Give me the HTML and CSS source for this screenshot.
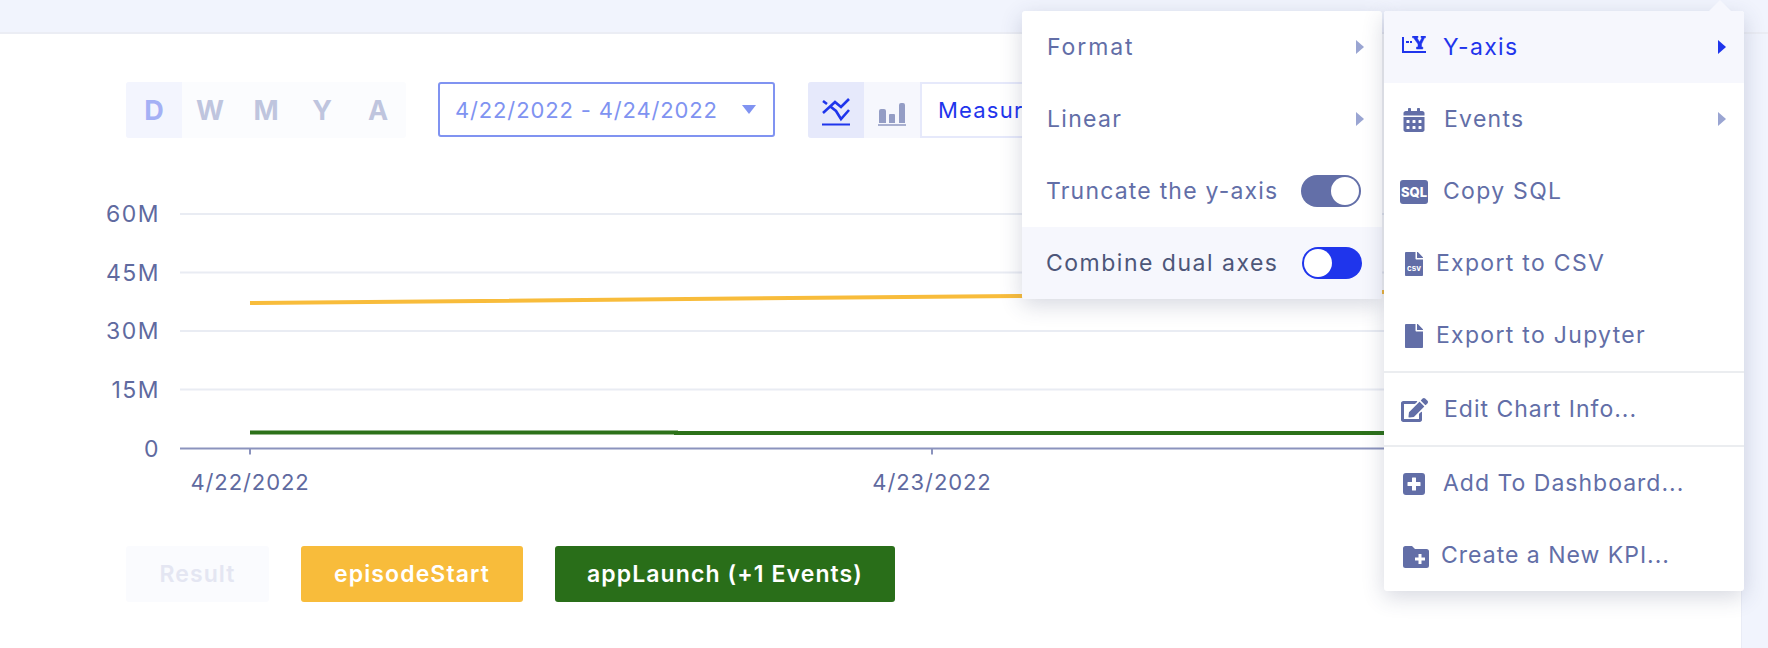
FILE: index.html
```html
<!DOCTYPE html>
<html lang="en">
<head>
<meta charset="utf-8">
<title>Chart</title>
<link rel="stylesheet" href="styles.css">
</head>
<body>
<header class="topbar"></header>
<div class="main">
  <section class="panel">
    <div class="toolbar">
      <div class="granularity">
        <span class="gran on">D</span><span class="gran">W</span><span class="gran">M</span><span class="gran">Y</span><span class="gran">A</span>
      </div>
      <div class="daterange"><span class="daterange-text">4/22/2022 - 4/24/2022</span><i class="caret"></i></div>
      <div class="charttype">
        <span class="ct on">
          <svg class="ct-icon" viewBox="0 0 28 28"><path d="M1 15L13 4l6 5 8-8M1 3l4 3M9 9l5 4 5 8 8-9" fill="none" stroke="#1f35ec" stroke-width="2.600"/><rect y="25.500" width="28" height="2" fill="#1f35ec"/></svg>
        </span>
        <span class="ct">
          <svg class="ct-icon" viewBox="0 0 28 28"><path d="M1 13a2 2 0 0 1 2-2h3a2 2 0 0 1 2 2v12H1zM11 17a1 1 0 0 1 1-1h4a1 1 0 0 1 1 1v8h-6zM21 7a2 2 0 0 1 2-2h2a2 2 0 0 1 2 2v18h-6z" fill="#949dc5"/><rect y="26" width="28" height="2" fill="#a9b0d0"/></svg>
        </span>
      </div>
      <div class="measure">Measure</div>
    </div>
    <svg class="chart" viewBox="0 138 1741 408">
      <g class="grid">
        <path d="M180 214H1710M180 272.500H1710M180 331H1710M180 389.500H1710"/>
      </g>
      <path class="axis" d="M180 448.500H1710M250 448.500v6M932 448.500v6"/>
      <path class="series-y" d="M250 303L1022 296L1384 292L1710 289"/>
      <path class="series-g" d="M250 432.500H676V433H1710"/>
      <g class="ylabels">
        <text x="160" y="222">60M</text>
        <text x="160" y="281">45M</text>
        <text x="160" y="339">30M</text>
        <text x="160" y="398">15M</text>
        <text x="160" y="457">0</text>
      </g>
      <g class="xlabels">
        <text x="250" y="490">4/22/2022</text>
        <text x="932" y="490">4/23/2022</text>
      </g>
    </svg>
    <div class="legend">
      <span class="tag tag-off">Result</span>
      <span class="tag tag-y">episodeStart</span>
      <span class="tag tag-g">appLaunch (+1 Events)</span>
    </div>
  </section>
  <aside class="side"></aside>
</div>

<div class="menu menu-sub">
  <div class="row"><span class="sub-label wide">Format</span><i class="tri"></i></div>
  <div class="row"><span class="sub-label">Linear</span><i class="tri"></i></div>
  <div class="row"><span class="sub-label tight">Truncate the y-axis</span><span class="toggle toggle-right"><b></b></span></div>
  <div class="row hl"><span class="sub-label tight dark">Combine dual axes</span><span class="toggle toggle-left"><b></b></span></div>
</div>

<div class="menu menu-main">
  <i class="notch"></i>
  <div class="row hl active">
    <svg class="ic ic-y" viewBox="0 0 24 18"><path d="M1 1v15h23" fill="none" stroke="#1f35ec" stroke-width="2"/><path d="M4 6h3M8 6h2" stroke="#1f35ec" stroke-width="2"/><path d="M10.500 0h5.500v1.800h-1l2.500 4.200 2.500-4.200h-1V0h4.500v1.800h-1L19.500 8v3h1.300v2h-6.300v-2h1.500V8l-4.500-6.200h-1z" fill="#1f35ec" stroke="#1f35ec" stroke-width=".5"/></svg>
    <span class="label">Y-axis</span><i class="tri"></i>
  </div>
  <div class="row">
    <svg class="ic ic-cal" viewBox="0 0 448 512"><path d="M0 464c0 26.500 21.500 48 48 48h352c26.500 0 48-21.500 48-48V192H0v272zm320-196c0-6.600 5.400-12 12-12h40c6.600 0 12 5.400 12 12v40c0 6.600-5.400 12-12 12h-40c-6.600 0-12-5.400-12-12v-40zm0 128c0-6.600 5.400-12 12-12h40c6.600 0 12 5.400 12 12v40c0 6.600-5.400 12-12 12h-40c-6.600 0-12-5.400-12-12v-40zM192 268c0-6.600 5.400-12 12-12h40c6.600 0 12 5.400 12 12v40c0 6.600-5.400 12-12 12h-40c-6.600 0-12-5.400-12-12v-40zm0 128c0-6.600 5.400-12 12-12h40c6.600 0 12 5.400 12 12v40c0 6.600-5.400 12-12 12h-40c-6.600 0-12-5.400-12-12v-40zM64 268c0-6.600 5.400-12 12-12h40c6.600 0 12 5.400 12 12v40c0 6.600-5.400 12-12 12H76c-6.600 0-12-5.400-12-12v-40zm0 128c0-6.600 5.400-12 12-12h40c6.600 0 12 5.400 12 12v40c0 6.600-5.400 12-12 12H76c-6.600 0-12-5.400-12-12v-40zM400 64h-48V16c0-8.800-7.200-16-16-16h-32c-8.800 0-16 7.200-16 16v48H160V16c0-8.800-7.200-16-16-16h-32c-8.800 0-16 7.200-16 16v48H48C21.500 64 0 85.500 0 112v48h448v-48c0-26.500-21.500-48-48-48z"/></svg>
    <span class="label">Events</span><i class="tri"></i>
  </div>
  <div class="row">
    <svg class="ic ic-sql" viewBox="0 0 28 24"><rect width="28" height="24" rx="3"/><text class="ic-text" x="14" y="17">SQL</text></svg>
    <span class="label">Copy SQL</span>
  </div>
  <div class="row">
    <svg class="ic ic-file" viewBox="0 0 384 512"><path d="M224 136V0H24C10.700 0 0 10.700 0 24v464c0 13.300 10.700 24 24 24h336c13.300 0 24-10.700 24-24V160H248c-13.200 0-24-10.800-24-24zm160-14.100v6.100H256V0h6.100c6.400 0 12.500 2.500 17 7l97.900 98c4.500 4.500 7 10.600 7 16.900z"/><text class="ic-csv" x="192" y="400">csv</text></svg>
    <span class="label">Export to CSV</span>
  </div>
  <div class="row">
    <svg class="ic ic-file" viewBox="0 0 384 512"><path d="M224 136V0H24C10.700 0 0 10.700 0 24v464c0 13.300 10.700 24 24 24h336c13.300 0 24-10.700 24-24V160H248c-13.200 0-24-10.800-24-24zm160-14.100v6.100H256V0h6.100c6.400 0 12.500 2.500 17 7l97.900 98c4.500 4.500 7 10.600 7 16.900z"/></svg>
    <span class="label">Export to Jupyter</span>
  </div>
  <hr class="sep">
  <div class="row">
    <svg class="ic ic-edit" viewBox="0 0 576 512"><path d="M402.600 83.200l90.200 90.200c3.800 3.800 3.800 10 0 13.800L274.400 405.600l-92.800 10.300c-12.400 1.400-22.900-9.100-21.500-21.500l10.300-92.800L388.800 83.200c3.800-3.800 10-3.800 13.800 0zm162-22.900l-48.800-48.800c-15.200-15.200-39.900-15.200-55.200 0l-35.400 35.400c-3.800 3.800-3.800 10 0 13.800l90.200 90.200c3.800 3.800 10 3.800 13.800 0l35.400-35.400c15.200-15.300 15.200-40 0-55.200zM384 346.200V448H64V128h229.800c3.200 0 6.200-1.300 8.500-3.500l40-40c7.600-7.600 2.200-20.500-8.500-20.500H48C21.500 64 0 85.500 0 112v352c0 26.500 21.500 48 48 48h352c26.500 0 48-21.500 48-48V306.200c0-10.700-12.900-16-20.500-8.500l-40 40c-2.200 2.300-3.500 5.300-3.500 8.500z"/></svg>
    <span class="label snug">Edit Chart Info...</span>
  </div>
  <hr class="sep">
  <div class="row">
    <svg class="ic ic-add" viewBox="0 0 22 22"><path fill-rule="evenodd" d="M3 0h16a3 3 0 0 1 3 3v16a3 3 0 0 1-3 3H3a3 3 0 0 1-3-3V3a3 3 0 0 1 3-3zm6 5v4H5a.5.5 0 0 0-.5.5v3a.5.5 0 0 0 .5.5h4v4a.5.5 0 0 0 .5.5h3a.5.5 0 0 0 .5-.5v-4h4a.5.5 0 0 0 .5-.5v-3a.5.5 0 0 0-.5-.5h-4V5a.5.5 0 0 0-.5-.5h-3A.5.5 0 0 0 9 5z"/></svg>
    <span class="label snug">Add To Dashboard...</span>
  </div>
  <div class="row">
    <svg class="ic ic-folder" viewBox="0 0 26 22"><path fill-rule="evenodd" d="M2.500 0h6.500l3 3h11.500A2.500 2.500 0 0 1 26 5.500v14a2.500 2.500 0 0 1-2.500 2.500h-21A2.500 2.500 0 0 1 0 19.500v-17A2.500 2.500 0 0 1 2.500 0zM15.500 8v3.500H12v3h3.500V18h3v-3.500H22v-3h-3.500V8z"/></svg>
    <span class="label snug">Create a New KPI...</span>
  </div>
</div>
</body>
</html>
```
FILE: styles.css
```css
* { box-sizing: border-box; }
html, body { margin: 0; padding: 0; }
body {
  width: 1768px;
  height: 648px;
  overflow: hidden;
  position: relative;
  display: flex;
  flex-direction: column;
  background: #f1f4fd;
  font-family: "Inter", "Liberation Sans", sans-serif;
  color: #626ea7;
}
.topbar {
  height: 34px;
  flex: none;
  background: #f1f4fd;
  border-bottom: 2px solid #ebedf4;
}
.main { flex: 1; display: flex; min-height: 0; }
.panel {
  width: 1742px;
  flex: none;
  background: #fff;
  padding-top: 48px;
  border-right: 1px solid #e9ecf6;
}
.side { flex: 1; }

.toolbar { display: flex; align-items: stretch; height: 56px; margin-left: 126px; }
.granularity { display: flex; width: 280px; background: #fbfcfe; border-radius: 3px; overflow: hidden; }
.gran {
  width: 56px;
  display: flex;
  align-items: center;
  justify-content: center;
  font-size: 27px;
  font-weight: 700;
  color: #bfc5de;
}
.gran.on { background: #f3f5fe; color: #a4b0f5; }
.daterange {
  margin-left: 32px;
  width: 337px;
  height: 55px;
  border: 2px solid #8093f1;
  border-radius: 3px;
  display: flex;
  align-items: center;
  padding-left: 15px;
  font-size: 22px;
  color: #8093f1;
}
.daterange-text { width: 262px; white-space: nowrap; letter-spacing: .85px; }
.caret {
  margin-left: 25px;
  border-left: 7.5px solid transparent;
  border-right: 7.5px solid transparent;
  border-top: 9px solid #8093f1;
}
.charttype {
  margin-left: 33px;
  display: flex;
  background: #f6f7fd;
  border-radius: 3px 0 0 3px;
  overflow: hidden;
}
.ct { width: 56px; display: flex; align-items: center; justify-content: center; }
.ct.on { background: #e6e9fb; }
.ct-icon { width: 28px; height: 28px; margin-top: 4px; }
.measure {
  width: 300px;
  border: 2px solid #e6e9fb;
  padding-left: 16px;
  display: flex;
  align-items: center;
  font-size: 22px;
  letter-spacing: 1.2px;
  color: #1f35ec;
}

.chart { display: block; width: 1741px; height: 408px; }
.grid path { stroke: #e9ecf3; stroke-width: 2; fill: none; }
.axis { stroke: #8b93bd; stroke-width: 2; fill: none; }
.series-y { stroke: #f8bc3b; stroke-width: 4; fill: none; }
.series-g { stroke: #2c7119; stroke-width: 4; fill: none; }
.ylabels text { font-size: 23px; fill: #5f6a9f; text-anchor: end; letter-spacing: 1.5px; }
.xlabels text { font-size: 22px; fill: #5f6a9f; text-anchor: middle; letter-spacing: .9px; }

.legend { display: flex; margin-left: 126px; gap: 32px; height: 56px; }
.tag {
  display: flex;
  align-items: center;
  justify-content: center;
  border-radius: 3px;
  font-size: 23px;
  font-weight: 600;
  letter-spacing: 1.1px;
  color: #fff;
}
.tag-off { width: 143px; background: #fafbfe; color: #e4e6f2; }
.tag-y { width: 222px; background: #f8bc3b; }
.tag-g { width: 340px; background: #296e19; }

.menu {
  position: absolute;
  top: 11px;
  background: #fff;
  border-radius: 3px;
  box-shadow: 0 6px 22px rgba(50, 60, 100, .2);
  font-size: 23px;
}
.menu-sub { left: 1022px; width: 360px; height: 288px; }
.menu-main { left: 1384px; width: 360px; height: 580px; }
.row {
  height: 72px;
  display: flex;
  align-items: center;
  position: relative;
  white-space: nowrap;
}
.hl { background: #f6f7fd; }
.row:first-of-type { border-radius: 3px 3px 0 0; }
.menu-sub .row:last-child { border-radius: 0 0 3px 3px; }
.sub-label { margin-left: 25px; letter-spacing: 1.3px; }
.sub-label.wide { letter-spacing: 1.9px; }
.sub-label.tight { margin-left: 24px; letter-spacing: 1.2px; }
.sub-label.tight.dark { letter-spacing: 1.5px; color: #4d5679; }
.active { color: #1f35ec; }
.label { letter-spacing: 1.3px; }
.label.snug { letter-spacing: 1px; }
.tri {
  position: absolute;
  right: 18px;
  top: 29px;
  border-left: 8px solid #9aa5d2;
  border-top: 7px solid transparent;
  border-bottom: 7px solid transparent;
}
.active .tri { border-left-color: #1f35ec; }
.toggle {
  position: absolute;
  width: 60px;
  height: 32px;
  border-radius: 16px;
  top: 20px;
}
.toggle b {
  position: absolute;
  top: 2px;
  width: 28px;
  height: 28px;
  border-radius: 50%;
  background: #fff;
}
.toggle-right { left: 279px; background: #636fa8; }
.toggle-right b { right: 2px; }
.toggle-left { left: 280px; background: #1f35ec; }
.toggle-left b { left: 2px; }

.notch {
  position: absolute;
  left: 325px;
  top: -11px;
  border-left: 11px solid transparent;
  border-right: 11px solid transparent;
  border-bottom: 11px solid #f6f7fd;
}
.sep { margin: 0; border: 0; height: 2px; background: #ebedf0; }

.ic { flex: none; fill: #626ea7; }
.ic-y { width: 24px; height: 18px; margin: -5px 17px 0 18px; }
.ic-cal { width: 22px; height: 24px; margin: 2px 19px 0 19px; }
.ic-sql { width: 28px; height: 24px; margin: 2px 15px 0 16px; }
.ic-file { width: 18px; height: 24px; margin: 2px 13px 0 21px; }
.ic-edit { width: 27px; height: 24px; margin: 2px 16px 0 17px; }
.ic-add { width: 22px; height: 22px; margin: 2px 18px 0 19px; }
.ic-folder { width: 26px; height: 22px; margin: 4px 12px 0 19px; }
.ic-text {
  font-family: "Inter", sans-serif;
  font-size: 13px;
  font-weight: 800;
  fill: #fff;
  text-anchor: middle;
}
.ic-csv {
  font-family: "Inter", sans-serif;
  font-size: 170px;
  font-weight: 700;
  fill: #fff;
  text-anchor: middle;
}
```
